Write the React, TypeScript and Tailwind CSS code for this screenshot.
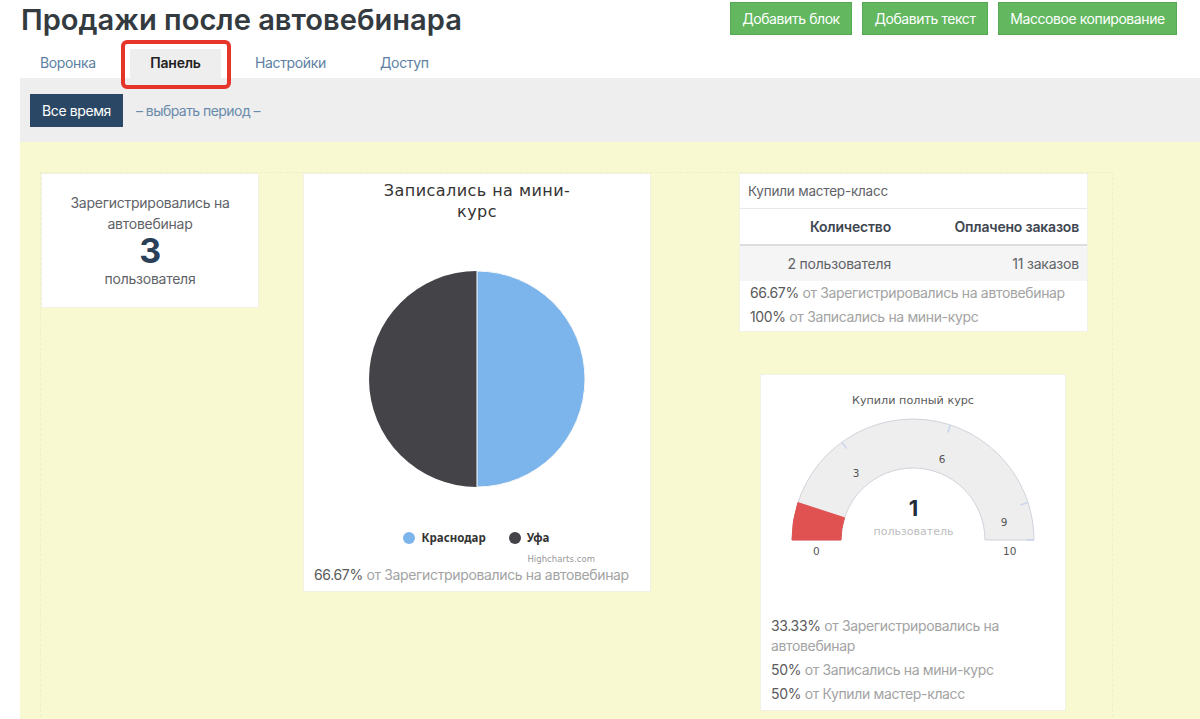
const font = { fontFamily: 'Inter, "Noto Sans", sans-serif' };
const chartFont = { fontFamily: '"DejaVu Sans", sans-serif' };

function polar(r: number, deg: number) {
  const a = (deg * Math.PI) / 180;
  return [121 - r * Math.cos(a), 121 - r * Math.sin(a)];
}

function band(from: number, to: number, ro = 121, ri = 72) {
  const [x1, y1] = polar(ro, from);
  const [x2, y2] = polar(ro, to);
  const [x3, y3] = polar(ri, to);
  const [x4, y4] = polar(ri, from);
  return `M${x1} ${y1}A${ro} ${ro} 0 0 1 ${x2} ${y2}L${x3} ${y3}A${ri} ${ri} 0 0 0 ${x4} ${y4}Z`;
}

function Gauge() {
  const ticks = [54, 108, 162, 180];
  return (
    <svg width="250" height="126" viewBox="-4 -1 250 126" className="block">
      <path d={band(0, 180)} fill="#eeeeee" stroke="#cfd3da" strokeWidth="1" />
      <path d={band(0, 18)} fill="#e05252" stroke="#e05252" strokeWidth="1" />
      {ticks.map((t) => {
        const [a, b] = polar(121, t);
        const [c, d] = polar(113, t);
        return <line key={t} x1={a} y1={b} x2={c} y2={d} stroke="#ccd6eb" strokeWidth="1.6" />;
      })}
      <g fontFamily='"DejaVu Sans", sans-serif' fontSize="10.5" fill="#555" textAnchor="middle">
        <text x="64" y="58">3</text>
        <text x="150" y="44">6</text>
        <text x="212" y="107">9</text>
      </g>
    </svg>
  );
}

function Stat({ pct, label }: { pct: string; label: string }) {
  return (
    <div className="text-[14px] leading-[20px] mb-1 text-[#a3a3a3] tracking-[-0.35px]">
      <span className="text-[#5a5a5a]">{pct}</span> от {label}
    </div>
  );
}

export default function App() {
  return (
    <div className="w-[1200px] h-[719px] overflow-hidden bg-white relative text-[#555]" style={font}>
      <header className="h-[41px] flex justify-between items-start pl-[21px] pr-[23px] pt-[2px]">
        <h1 className="text-[29.1px] leading-[36px] font-semibold text-[#333a40]">Продажи после автовебинара</h1>
        <div className="flex gap-[10px]">
          {["Добавить блок", "Добавить текст", "Массовое копирование"].map((b, i) => (
            <button
              key={b}
              className={`${i === 0 ? "w-[122px]" : i === 1 ? "w-[126px]" : "w-[179px]"} h-[33px] bg-[#62b75f] border border-[#55a953] text-white text-[14px] tracking-[-0.42px]`}
            >
              {b}
            </button>
          ))}
        </div>
      </header>

      <nav className="h-[37px] flex items-end pl-[20px] text-[14px] tracking-[-0.35px]">
        <a className="w-[96px] h-[29px] pl-[20px] leading-[28px] text-[#5d7fa3]">Воронка</a>
        <a className="ml-[14px] w-[91px] h-[29px] bg-[#eeeeee] text-center leading-[28px] font-semibold text-[#222] tracking-[-0.2px]">Панель</a>
        <a className="w-[159px] h-[29px] pl-[34px] leading-[28px] text-[#5d7fa3]">Настройки</a>
        <a className="h-[29px] leading-[28px] text-[#5d7fa3]">Доступ</a>
      </nav>

      <div className="absolute left-[121px] top-[40px] w-[110px] h-[49px] border-[4px] border-[#e5352b] rounded-[6px]" />

      <div className="ml-[20px] h-[64px] bg-[#eeeeee] pl-[10px] pt-[16px] flex items-start text-[14px] tracking-[-0.4px]">
        <span className="w-[93px] h-[33px] bg-[#2a4865] text-white flex items-center justify-center">Все время</span>
        <span className="ml-[13px] h-[33px] flex items-center text-[#6a8bab] tracking-[-0.55px]">– выбрать период –</span>
      </div>

      <main className="ml-[20px] h-[577px] bg-[#f8f9d0] pl-[20px] pt-[30px]">
        <div className="h-[560px] w-[1073px] border border-dashed border-[#eef0c6] flex items-start">
          <section className="w-[218px] h-[135px] bg-white border border-[#f1f1e4] text-center text-[14px] leading-[21px] pt-[18px] text-[#5f6368] tracking-[-0.25px]">
            <div className="px-4">Зарегистрировались на автовебинар</div>
            <div className="text-[34px] leading-[34px] font-bold text-[#2a4058]">3</div>
            <div>пользователя</div>
          </section>

          <section className="ml-[44px] w-[348px] h-[419px] bg-white border border-[#f1f1e4] flex flex-col items-center">
            <h2 className="mt-[6px] w-[220px] text-center text-[16px] leading-[21px] tracking-[0.45px] text-[#333]" style={chartFont}>
              Записались на мини-курс
            </h2>
            <svg width="218" height="218" viewBox="0 0 218 218" className="mt-[48px] block">
              <circle cx="109" cy="109" r="108" fill="#434348" />
              <path d="M109 1A108 108 0 0 1 109 217Z" fill="#7cb5ec" stroke="#ffffff" strokeWidth="1" />
            </svg>
            <div className="mt-[41px] -ml-[2px] flex items-center text-[11.5px] font-bold text-[#333]" style={{ fontFamily: '"Noto Sans", sans-serif' }}>
              <span className="w-[12px] h-[12px] rounded-full bg-[#7cb5ec] mr-[7px]" />
              <span>Краснодар</span>
              <span className="w-[12px] h-[12px] rounded-full bg-[#434348] ml-[23px] mr-[6px]" />
              <span>Уфа</span>
            </div>
            <div className="self-end mr-[55px] mt-[7px] text-[8.5px] leading-[12px] text-[#999] tracking-[0.05px]" style={chartFont}>Highcharts.com</div>
            <div className="self-start pl-[10px]"><Stat pct="66.67%" label="Зарегистрировались на автовебинар" /></div>
          </section>

          <div className="ml-[88px] w-[349px] flex flex-col items-start">
            <section className="w-[349px] h-[159px] bg-white border border-[#f1f1e4] text-[14px] tracking-[-0.2px]">
              <div className="h-[35px] pl-[8px] leading-[35px] text-[13.5px] text-[#5f6368] border-b border-[#e8e8e8]">Купили мастер-класс</div>
              <div className="h-[37px] flex items-center font-semibold text-[#3e4650] border-b-2 border-[#dddddd]">
                <span className="w-[151px] text-right">Количество</span>
                <span className="flex-1 text-right pr-[8px]">Оплачено заказов</span>
              </div>
              <div className="h-[35px] flex items-center bg-[#f5f5f5] text-[#5f6368]">
                <span className="w-[151px] text-right">2 пользователя</span>
                <span className="flex-1 text-right pr-[8px]">11 заказов</span>
              </div>
              <div className="pl-[10px] pt-[2px]">
                <Stat pct="66.67%" label="Зарегистрировались на автовебинар" />
                <Stat pct="100%" label="Записались на мини-курс" />
              </div>
            </section>

            <section className="ml-[21px] mt-[42px] w-[306px] h-[337px] bg-white border border-[#f1f1e4] relative">
              <div className="mt-[18px] text-center text-[11.2px] leading-[16px] text-[#5a5a5a]" style={chartFont}>Купили полный курс</div>
              <div className="relative ml-[27px] mt-[9px] h-[160px]">
                <Gauge />
                <div className="absolute left-[1px] top-[77px] w-[249px] text-center text-[22px] leading-[26px] font-bold text-[#1f2d3d]">1</div>
                <div className="absolute left-[1px] top-[106px] w-[249px] text-center text-[11px] leading-[16px] text-[#bdbdbd]" style={chartFont}>пользователь</div>
                <div className="absolute left-[25px] top-[126px] text-[10.5px] leading-[14px] text-[#555]" style={chartFont}>0</div>
                <div className="absolute left-[215px] top-[126px] text-[10.5px] leading-[14px] text-[#555]" style={chartFont}>10</div>
              </div>
              <div className="absolute left-[10px] top-[241px] w-[260px]">
                <Stat pct="33.33%" label="Зарегистрировались на автовебинар" />
                <Stat pct="50%" label="Записались на мини-курс" />
                <Stat pct="50%" label="Купили мастер-класс" />
              </div>
            </section>
          </div>
        </div>
      </main>
    </div>
  );
}
